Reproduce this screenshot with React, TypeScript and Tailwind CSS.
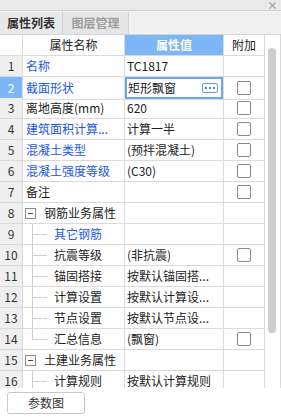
import React from "react";

type Row = {
  no: number;
  name: string;
  value?: string;
  blue?: boolean;
  check?: boolean;
  kind?: "group" | "child" | "lastChild";
};

const rows: Row[] = [
  { no: 1, name: "名称", value: "TC1817", blue: true },
  { no: 2, name: "截面形状", value: "矩形飘窗", blue: true, check: true },
  { no: 3, name: "离地高度(mm)", value: "620", check: true },
  { no: 4, name: "建筑面积计算...", value: "计算一半", blue: true, check: true },
  { no: 5, name: "混凝土类型", value: "(预拌混凝土)", blue: true, check: true },
  { no: 6, name: "混凝土强度等级", value: "(C30)", blue: true, check: true },
  { no: 7, name: "备注", check: true },
  { no: 8, name: "钢筋业务属性", kind: "group" },
  { no: 9, name: "其它钢筋", blue: true, kind: "child" },
  { no: 10, name: "抗震等级", value: "(非抗震)", check: true, kind: "child" },
  { no: 11, name: "锚固搭接", value: "按默认锚固搭...", kind: "child" },
  { no: 12, name: "计算设置", value: "按默认计算设...", kind: "child" },
  { no: 13, name: "节点设置", value: "按默认节点设...", kind: "child" },
  { no: 14, name: "汇总信息", value: "(飘窗)", check: true, kind: "lastChild" },
  { no: 15, name: "土建业务属性", kind: "group" },
  { no: 16, name: "计算规则", value: "按默认计算规则", kind: "child" },
];

const font = { fontFamily: '"Noto Sans CJK SC", "Noto Sans", sans-serif' };

function CheckBox() {
  return <span className="block w-[14px] h-[14px] rounded-[2px] border border-[#8a8a8a] bg-white" />;
}

function NameCell({ row }: { row: Row }) {
  const color = row.blue ? "text-[#2457e6]" : "text-[#222]";
  if (row.kind === "group") {
    return (
      <div className="flex items-center h-full pl-[2px]">
        <span className="flex items-center justify-center w-[11px] h-[11px] border border-[#8c8c8c] bg-white">
          <span className="block w-[5px] h-px bg-[#444]" />
        </span>
        <span className={`ml-[8px] ${color}`}>{row.name}</span>
      </div>
    );
  }
  if (row.kind) {
    const last = row.kind === "lastChild";
    return (
      <div className="flex items-center h-full">
        {/* tree connector */}
        <span className="relative w-[31px] h-full shrink-0">
          <span className={`absolute left-[9px] top-0 w-px bg-[#cfcfcf] ${last ? "h-[10px]" : "h-full"}`} />
          <span className="absolute left-[9px] top-[10px] w-[15px] h-px bg-[#cfcfcf]" />
        </span>
        <span className={color}>{row.name}</span>
      </div>
    );
  }
  return <div className={`flex items-center h-full pl-[3px] ${color}`}>{row.name}</div>;
}

export default function App() {
  return (
    <div className="w-[281px] h-[418px] bg-white text-[12px] text-[#222] overflow-hidden flex flex-col" style={font}>
      {/* title strip */}
      <div className="h-[11px] shrink-0 bg-[#e9e9e9] border-b border-[#d2d2d2] flex justify-end items-center pr-[5px]">
        <svg width="7" height="7" viewBox="0 0 7 7" stroke="#a0a0a0" strokeWidth="1.1">
          <path d="M0.5 0.5L6.5 6.5M6.5 0.5L0.5 6.5" />
        </svg>
      </div>

      {/* tabs */}
      <div className="h-[24px] shrink-0 bg-[#f0f0f0] border-b border-[#d4d4d4] flex items-end">
        <div className="h-[22px] w-[63px] flex items-center justify-center bg-[#e8e8e8] border-r border-[#cfcfcf] font-bold text-[#333]">
          属性列表
        </div>
        <div className="h-[22px] w-[66px] flex items-center justify-center bg-[#e6e6e6] border-r border-[#d4d4d4] font-bold text-[#9d9d9d]">
          图层管理
        </div>
      </div>

      {/* grid */}
      <div className="h-[353px] shrink-0 flex overflow-hidden">
        <div className="w-[265px] shrink-0">
          <div className="grid grid-cols-[23px_102px_99px_41px] h-[21px]">
            <div className="border-r border-b border-[#dadada] bg-white" />
            <div className="border-r border-b border-[#dadada] flex items-center justify-center">属性名称</div>
            <div className="border-r border-b border-[#dadada] bg-[#7db6f6] text-white font-bold flex items-center justify-center">
              属性值
            </div>
            <div className="border-r border-b border-[#dadada] flex items-center justify-center">附加</div>
          </div>
          {rows.map((r) => {
            const sel = r.no === 2;
            return (
              <div key={r.no} className="grid grid-cols-[23px_102px_99px_41px] h-[21px]">
                <div
                  className={`border-r border-b border-[#dadada] flex items-center justify-center ${
                    sel ? "bg-[#7db6f6] text-white" : "bg-[#efefef] text-[#333]"
                  }`}
                >
                  {r.no}
                </div>
                <div className="border-r border-b border-[#dadada] whitespace-nowrap overflow-hidden">
                  <NameCell row={r} />
                </div>
                {sel ? (
                  <div className="border-b border-r border-[#dadada]">
                    <div className="h-full flex items-center justify-between pl-[1px] pr-[3px] border-2 border-[#6aa8f0]">
                      <span>{r.value}</span>
                      <span className="flex items-center justify-center gap-[2px] w-[16px] h-[10px] rounded-[2px] border border-[#5d9ce9] bg-white">
                        <span className="w-[2px] h-[2px] bg-[#3f86e0]" />
                        <span className="w-[2px] h-[2px] bg-[#3f86e0]" />
                        <span className="w-[2px] h-[2px] bg-[#3f86e0]" />
                      </span>
                    </div>
                  </div>
                ) : (
                  <div className="border-r border-b border-[#dadada] flex items-center pl-[2px] whitespace-nowrap overflow-hidden">
                    {r.value}
                  </div>
                )}
                <div className="border-r border-b border-[#dadada] flex items-center justify-center">
                  {r.check && <CheckBox />}
                </div>
              </div>
            );
          })}
        </div>
        {/* scrollbar */}
        <div className="flex-1 border-r border-[#dadada] pt-[13px] pl-[3px]">
          <div className="w-[8px] h-[285px] rounded-full bg-[#cdcdcd]" />
        </div>
      </div>

      {/* footer */}
      <div className="flex-1 pt-[4px] pl-[7px]">
        <button className="w-[78px] h-[22px] rounded-[3px] border border-[#c9c9c9] bg-white flex items-center justify-center text-[#333]">
          参数图
        </button>
      </div>
    </div>
  );
}
